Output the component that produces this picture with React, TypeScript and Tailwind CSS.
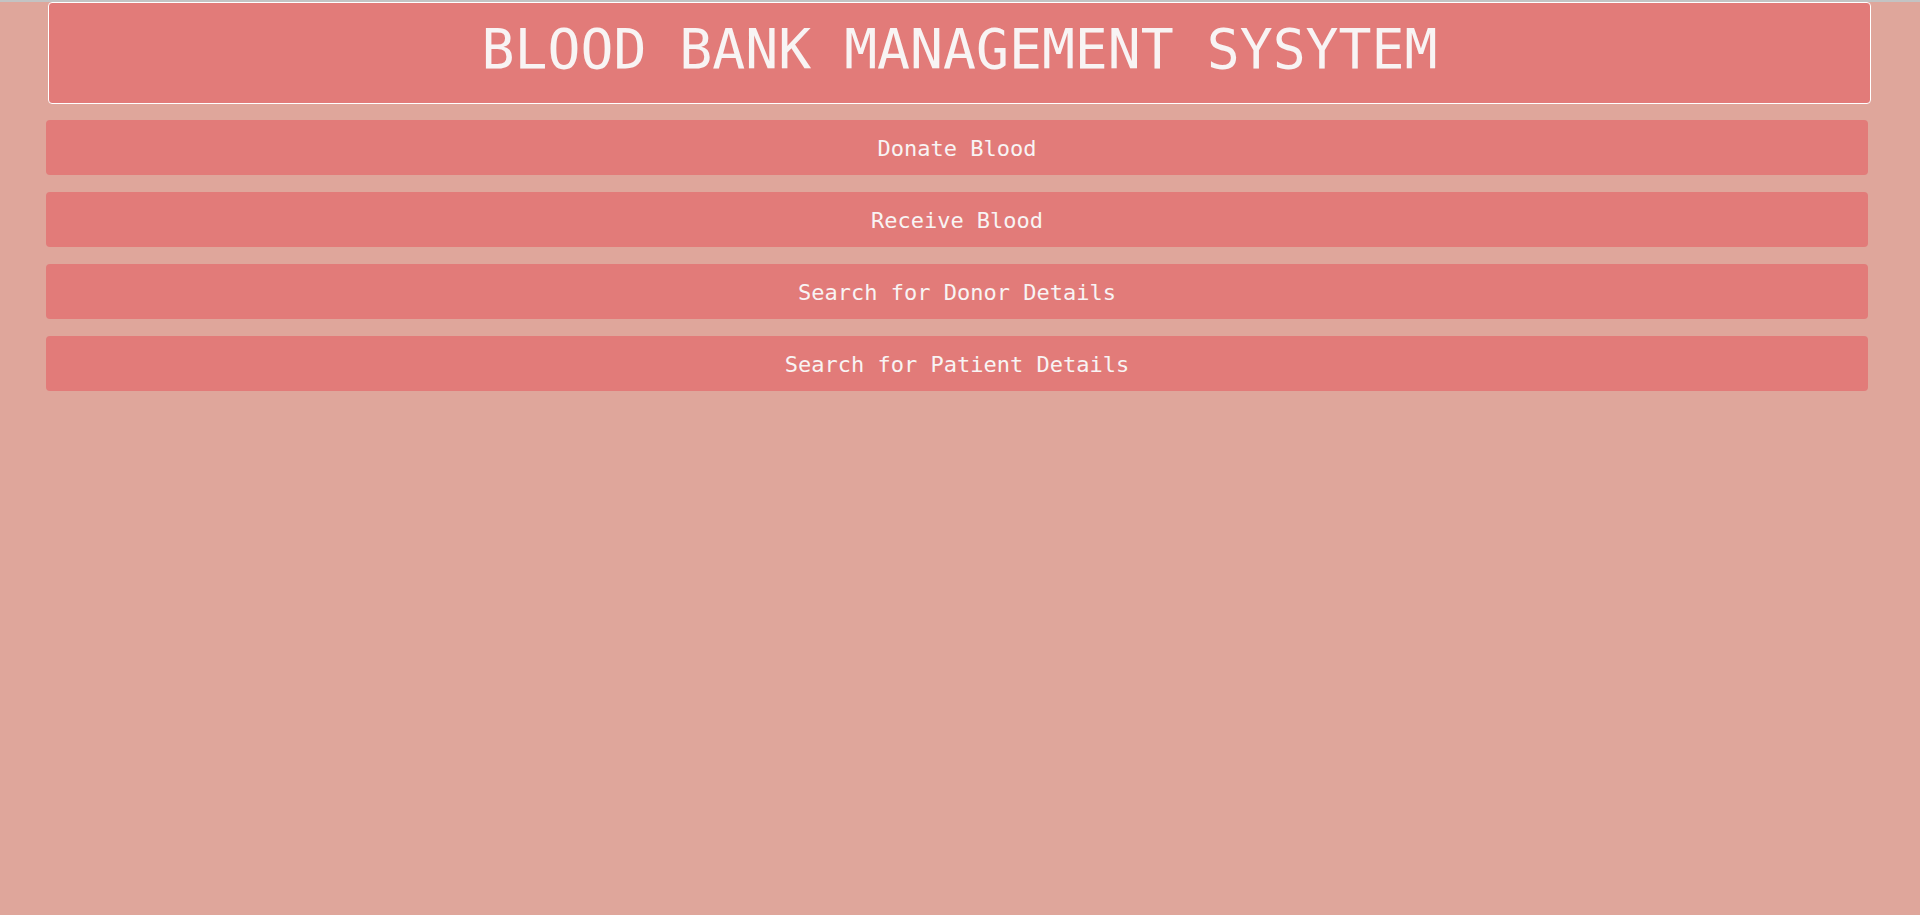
const options = [
  "Donate Blood",
  "Receive Blood",
  "Search for Donor Details",
  "Search for Patient Details",
];

export default function App() {
  return (
    <div className="min-h-[915px] bg-[#dfa69b] font-['DejaVu_Sans_Mono',monospace] text-[#f8f4f4]">
      <div className="h-[2px] bg-[#c3c3c3]" />
      <header className="ml-[48px] flex h-[102px] w-[1823px] items-center justify-center rounded-[4px] border border-white bg-[#e27b79] pb-[8px]">
        <h1 className="text-[54.75px] leading-none">BLOOD BANK MANAGEMENT SYSYTEM</h1>
      </header>
      <div className="ml-[46px] mt-[16px] flex w-[1822px] flex-col gap-[17px]">
        {options.map((label) => (
          <button
            key={label}
            className="flex h-[55px] items-center justify-center rounded-[4px] bg-[#e27b79] pt-[2px] text-[22px] text-[#f8f4f4]"
          >
            {label}
          </button>
        ))}
      </div>
    </div>
  );
}
